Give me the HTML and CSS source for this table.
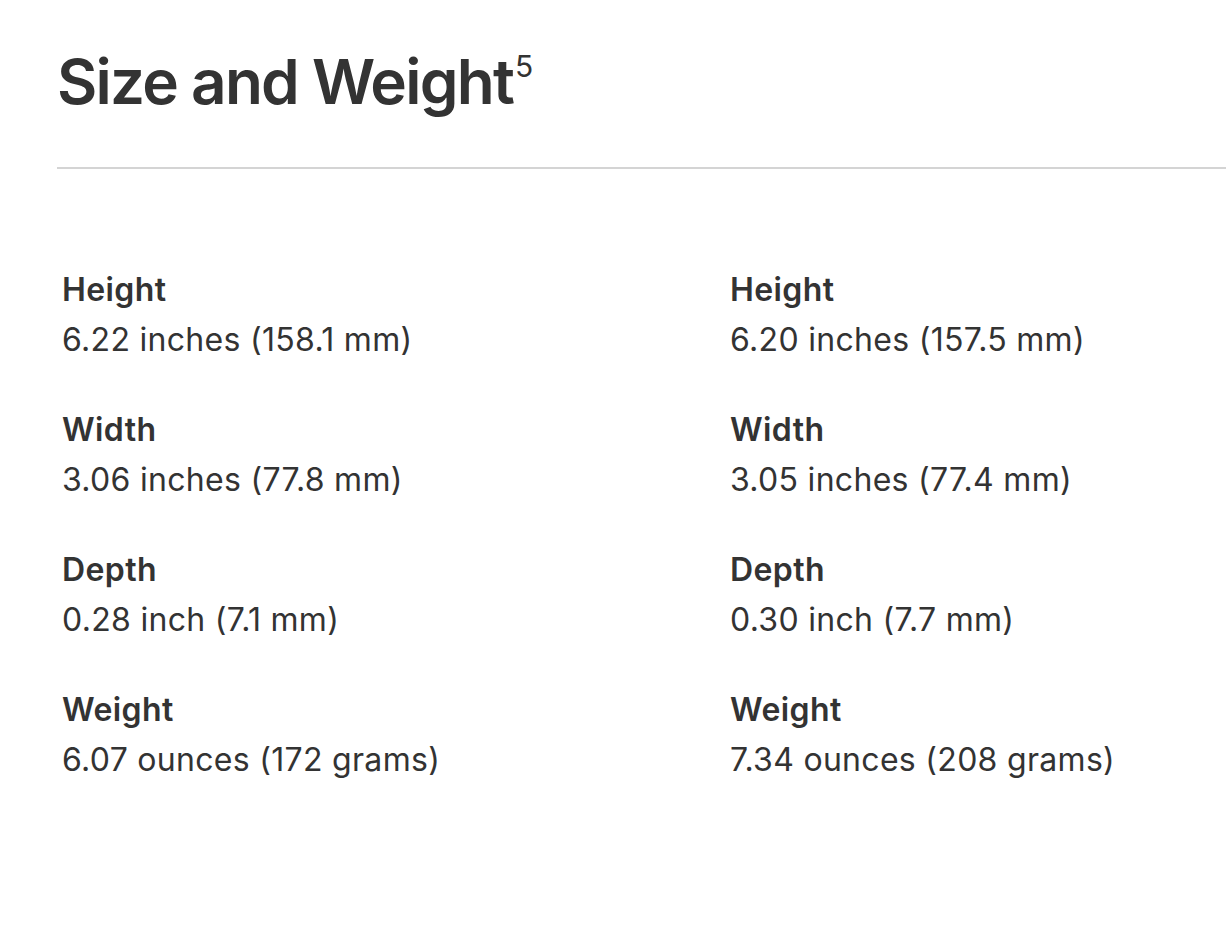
FILE: index.html
```html
<!DOCTYPE html>
<html>
<head>
<meta charset="utf-8">
<link rel="stylesheet" href="styles.css">
</head>
<body>
<div class="page">
  <h1 class="title">Size and Weight<sup>5</sup></h1>
  <hr class="rule">
  <div class="cols">
    <div class="col">
      <div class="spec"><div class="label">Height</div><div class="value">6.22 inches (158.1 mm)</div></div>
      <div class="spec"><div class="label">Width</div><div class="value">3.06 inches (77.8 mm)</div></div>
      <div class="spec"><div class="label">Depth</div><div class="value">0.28 inch (7.1 mm)</div></div>
      <div class="spec"><div class="label">Weight</div><div class="value">6.07 ounces (172 grams)</div></div>
    </div>
    <div class="col">
      <div class="spec"><div class="label">Height</div><div class="value">6.20 inches (157.5 mm)</div></div>
      <div class="spec"><div class="label">Width</div><div class="value">3.05 inches (77.4 mm)</div></div>
      <div class="spec"><div class="label">Depth</div><div class="value">0.30 inch (7.7 mm)</div></div>
      <div class="spec"><div class="label">Weight</div><div class="value">7.34 ounces (208 grams)</div></div>
    </div>
  </div>
</div>
</body>
</html>
```
FILE: styles.css
```css
html, body {
  margin: 0;
  padding: 0;
  background: #fff;
}
body {
  font-family: Inter, "Noto Sans", sans-serif;
  color: #333;
}
.page {
  padding-left: 57px;
}
.title {
  margin: 0;
  padding-top: 44px;
  font-size: 62px;
  line-height: 76px;
  font-weight: 600;
  letter-spacing: -1.75px;
  color: #333;
}
.title sup {
  font-size: 30px;
  font-weight: 400;
  line-height: 0;
  vertical-align: baseline;
  position: relative;
  top: -27px;
  letter-spacing: 0;
  margin-left: 2px;
}
.rule {
  margin: 47px 0 0 0;
  border: 0;
  height: 2px;
  background: #d4d4d4;
}
.cols {
  display: grid;
  grid-template-columns: 668px 1fr;
  padding-left: 5px;
  padding-top: 96px;
}
.col {
  display: flex;
  flex-direction: column;
  gap: 40px;
}
.label {
  font-size: 32px;
  line-height: 50px;
  font-weight: 600;
  letter-spacing: 0.4px;
}
.value {
  font-size: 32px;
  line-height: 50px;
  font-weight: 400;
  letter-spacing: 0.3px;
}
```
